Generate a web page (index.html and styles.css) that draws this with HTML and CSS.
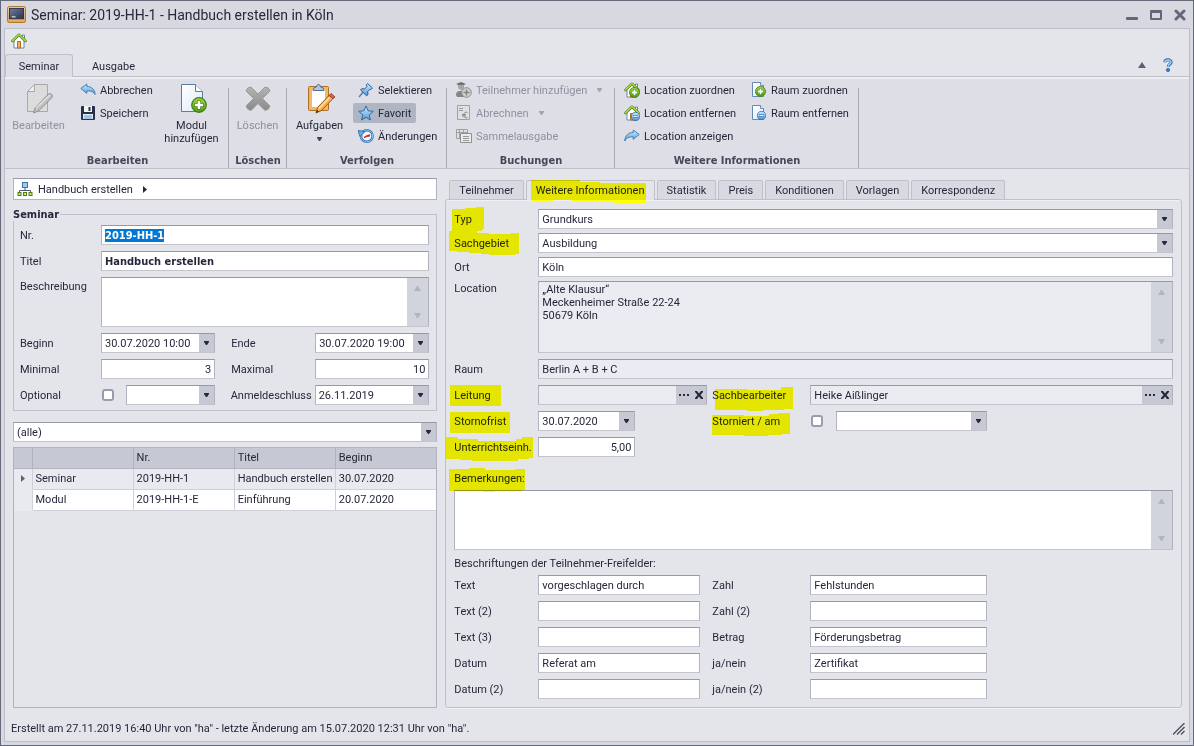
FILE: index.html
```html
<!DOCTYPE html>
<html lang="de">
<head>
<meta charset="utf-8">
<title>Seminar: 2019-HH-1 - Handbuch erstellen in Köln</title>
<link rel="stylesheet" href="styles.css">
</head>
<body>
<svg class="defs" width="0" height="0" aria-hidden="true">
  <defs>
    <linearGradient id="gBlue" x1="0" y1="0" x2="0" y2="1"><stop offset="0" stop-color="#d6edfc"/><stop offset="1" stop-color="#4c98d8"/></linearGradient>
    <linearGradient id="gGreen" x1="0" y1="0" x2="0" y2="1"><stop offset="0" stop-color="#a6d84a"/><stop offset="1" stop-color="#4f9a12"/></linearGradient>
    <linearGradient id="gGray" x1="0" y1="0" x2="0" y2="1"><stop offset="0" stop-color="#b4b4b4"/><stop offset="1" stop-color="#8a8a8a"/></linearGradient>
    <linearGradient id="gPage" x1="0" y1="0" x2="1" y2="1"><stop offset="0" stop-color="#ffffff"/><stop offset="1" stop-color="#dfeafa"/></linearGradient>
    <linearGradient id="gOrange" x1="0" y1="0" x2="0" y2="1"><stop offset="0" stop-color="#ffdfae"/><stop offset="1" stop-color="#e5a355"/></linearGradient>
    <linearGradient id="gScreen" x1="0" y1="0" x2="1" y2="1"><stop offset="0" stop-color="#6f7d9c"/><stop offset="1" stop-color="#27324e"/></linearGradient>
    <symbol id="down" viewBox="0 0 5 4"><path d="M0 0h5v1L3 4H2L0 1z"/></symbol>
    <symbol id="up" viewBox="0 0 7 5"><path d="M3 0h1l3 5H0z"/></symbol>
    <symbol id="down7" viewBox="0 0 7 5"><path d="M0 0h7L4 5H3z"/></symbol>
    <symbol id="house" viewBox="0 0 16 16">
      <path d="M11.500 2h2v4l-2-2z" fill="#fff" stroke="#6e84a8"/>
      <path d="M3 7.500l5-5 5 5v7.500H3z" fill="#fff" stroke="#6e84a8"/>
      <path d="M6.500 8.500h3V15h-3z" fill="#f2b066" stroke="#b06a22"/>
      <path d="M1.500 8L8 1.800 14.500 8" fill="none" stroke="#5a8c1a" stroke-width="2.600" stroke-linecap="round" stroke-linejoin="round"/>
      <path d="M1.500 7.800L8 1.600l6.500 6.200" fill="none" stroke="#b7de55" stroke-width="1.200" stroke-linecap="round" stroke-linejoin="round"/>
    </symbol>
    <symbol id="plus" viewBox="0 0 16 16">
      <circle cx="8" cy="8" r="7.300" fill="url(#gGreen)" stroke="#3d7f14" stroke-width="1.200"/>
      <path d="M8 3.500v9M3.500 8h9" stroke="#3d7f14" stroke-width="4"/><path d="M8 4v8M4 8h8" stroke="#fff" stroke-width="2.600"/>
    </symbol>
    <symbol id="minus" viewBox="0 0 16 16">
      <circle cx="8" cy="8" r="7.200" fill="url(#gBlue)" stroke="#2a69ab" stroke-width="1.400"/>
      <path d="M3.500 8h9" stroke="#1f5c9d" stroke-width="3.600"/><path d="M4 8h8" stroke="#fff" stroke-width="1.600"/>
    </symbol>
    <symbol id="page" viewBox="0 0 16 16"><path d="M1.500.5h8l3 3v11h-11z" fill="url(#gPage)" stroke="#6a88b4"/><path d="M9.500.5v3h3" fill="#fff" stroke="#6a88b4"/></symbol>
    <symbol id="undo" viewBox="0 0 16 16"><path d="M.8 6.500l6-4.500v2.500c5 0 8 3 8.300 8-1.600-3-4.100-3.700-8.300-3.700v2.500z" fill="url(#gBlue)" stroke="#3f7db8" stroke-linejoin="round"/></symbol>
  </defs>
</svg>

<div class="window">
  <header class="titlebar">
    <svg class="app-icon" viewBox="0 0 20 18"><rect x=".5" y=".5" width="19" height="17" rx="2" fill="url(#gOrange)" stroke="#a8702c"/><rect x="2.500" y="2.500" width="15" height="11" fill="url(#gScreen)" stroke="#222b44"/><path d="M5 11.500h4" stroke="#fff"/></svg>
    <h1 class="title">Seminar: 2019-HH-1 - Handbuch erstellen in Köln</h1>
    <div class="window-buttons">
      <button aria-label="Minimieren"><svg viewBox="0 0 12 12"><rect y="8" width="12" height="3" rx="1"/></svg></button>
      <button aria-label="Maximieren"><svg viewBox="0 0 12 12"><path d="M1 1h10a1 1 0 0 1 1 1v8a1 1 0 0 1-1 1H1a1 1 0 0 1-1-1V2a1 1 0 0 1 1-1zm1 3v5h8V4z" fill-rule="evenodd"/></svg></button>
      <button aria-label="Schließen"><svg viewBox="0 0 12 12"><path d="M2 2l8 8M10 2l-8 8" stroke="#636779" stroke-width="3" stroke-linecap="round"/></svg></button>
    </div>
  </header>

  <div class="client">
    <div class="quickbar"><button aria-label="Start"><svg class="i16"><use href="#house"/></svg></button></div>
    <nav class="ribbon-tabs">
      <button class="ribbon-tab ribbon-tab-active">Seminar</button>
      <button class="ribbon-tab">Ausgabe</button>
      <div class="ribbon-help">
        <button aria-label="Menüband minimieren"><svg class="collapse" viewBox="0 0 8 6"><path d="M4 0l4 6H0z"/></svg></button>
        <button aria-label="Hilfe"><svg class="help" viewBox="0 0 10 14"><path d="M1.800 4.300C1.800 1 8.200 1 8.200 4.200c0 2.200-3 2-3 4.600" fill="none" stroke="#2d6aab" stroke-width="3"/><path d="M1.800 4C2 1.500 8 1.200 8 4.200c0 2-2.800 1.800-2.800 4.200" fill="none" stroke="#a5d3f5" stroke-width="1.400"/><circle cx="5" cy="12" r="1.700" fill="#3a7cc0" stroke="#2356a0" stroke-width=".6"/></svg></button>
      </div>
    </nav>

    <section class="ribbon">
      <div class="group g-edit">
        <div class="tools">
          <button class="big" disabled>
            <svg class="i32" viewBox="0 0 32 32"><path d="M11.500 2.500h13v27h-20v-20z" fill="#dcdcdc" stroke="#a9a9a9"/><path d="M11.500 2.500v7h-7z" fill="#f0f0f0" stroke="#a9a9a9"/><path d="M10.500 31l1.500-5L25.500 12c2-1.500 5 1.500 3.500 3.500L15.500 29z" fill="#c0c0c0" stroke="#8f8f8f"/><path d="M13 26L27 13" stroke="#e2e2e2" stroke-width="1.500"/></svg>
            <span>Bearbeiten</span></button>
          <div class="stack">
            <button class="small"><svg class="i16"><use href="#undo"/></svg>Abbrechen</button>
            <button class="small"><svg class="i16" viewBox="0 0 16 16"><rect x="1" y="1" width="14" height="14" rx="1" fill="#26324a"/><path d="M4 1h8v6H4z" fill="#f4f6fa"/><path d="M8.500 2h2v4h-2z" fill="#26324a"/><path d="M3 9h10v5H3z" fill="#e4edf8"/><path d="M4 11h8M4 13h8" stroke="#5f9bd0"/></svg>Speichern</button>
          </div>
          <button class="big">
            <svg class="i32" viewBox="0 0 32 32"><path d="M5.500 2.500h14l7 7v20h-21z" fill="url(#gPage)" stroke="#5b7aa8"/><path d="M19.500 2.500v7h7" fill="#fff" stroke="#5b7aa8"/><use href="#plus" x="15" y="15" width="16" height="16"/></svg>
            <span>Modul hinzufügen</span></button>
        </div>
        <h2>Bearbeiten</h2>
      </div>
      <div class="group g-delete">
        <div class="tools">
          <button class="big" disabled>
            <svg class="i32" viewBox="0 0 32 32"><path d="M9 5l7 7 7-7q4 0 5 4l-7.500 7.500L28 24q-1 4-5 4.500l-7-7-7 7Q5 28 4 24l7.500-7.500L4 9q1-4 5-4z" fill="url(#gGray)" stroke="#9a9a9a"/></svg>
            <span>Löschen</span></button>
        </div>
        <h2>Löschen</h2>
      </div>
      <div class="group g-track">
        <div class="tools">
          <button class="big">
            <svg class="i32" viewBox="0 0 32 32"><rect x="4.500" y="4.500" width="20" height="24" rx="1" fill="#f5b862" stroke="#a9702a"/><path d="M7.500 7.500h14v18h-14z" fill="#fff" stroke="#b9c3d8"/><path d="M9 8.500q0-3.500 3.500-3.500 0-2.500 2-2.500t2 2.500q3.500 0 3.500 3.500z" fill="#b4c4de" stroke="#5a6f98"/><path d="M12 31l1.500-5.500L25 13.500l4 3L17.500 28.500z" fill="#f6b153" stroke="#9a5a18"/><path d="M15 26.500L26 15" stroke="#ffe0a0" stroke-width="1.500"/><path d="M25 13.500l2-2 4 3.500-2 1.500z" fill="#e2635a" stroke="#9a3c36"/><path d="M12 31l1-3 2 1.500z" fill="#333"/></svg>
            <span>Aufgaben</span><svg class="caret"><use href="#down"/></svg></button>
          <div class="stack">
            <button class="small"><svg class="i16" viewBox="0 0 16 16"><path d="M1 15l5-6" stroke="#5f7fa5" stroke-width="1.500"/><path d="M9.500 1.500l5 4.500-1.500 1.500-1-.3-2.300 2.500.3 3-1.500 1-6-5.700 1.300-1.300 2.700.3L9 4.500l-.6-1.600z" fill="url(#gBlue)" stroke="#235c99"/></svg>Selektieren</button>
            <button class="small small-on" aria-pressed="true"><svg class="i16" viewBox="0 0 16 16"><path d="M8 1l2.100 4.800 5.200.5-4 3.500 1.200 5.200L8 12.300 3.500 15l1.200-5.200-4-3.500 5.200-.5z" fill="url(#gBlue)" stroke="#2b6cad" stroke-linejoin="round"/></svg>Favorit</button>
            <button class="small"><svg class="i16" viewBox="0 0 16 16"><circle cx="8.800" cy="8" r="5.800" fill="#f4f8fd" stroke="#2f73b5" stroke-width="2.400"/><circle cx="8.800" cy="8" r="5.900" fill="none" stroke="#8fc4ec" stroke-width="1"/><path d="M0 2.500l7 1L2 8.500z" fill="#6cb0e4" stroke="#235c99" stroke-width=".8"/><path d="M6 9.500L9 8l3-1" stroke="#d33" stroke-width="1.500"/><path d="M9 8h3" stroke="#444"/></svg>Änderungen</button>
          </div>
        </div>
        <h2>Verfolgen</h2>
      </div>
      <div class="group g-book">
        <div class="tools">
          <div class="stack">
            <button class="small" disabled><svg class="i16" viewBox="0 0 16 16"><path d="M0 2l5-2 5 2-5 2z" fill="#707070"/><path d="M2 3h6v3q-3 4-6 0z" fill="#a8a8a8"/><path d="M0 13q0-4 4-4h4v6H1z" fill="#858585"/><circle cx="10.500" cy="10.500" r="4.800" fill="#d0d0d0" stroke="#8a8a8a"/><path d="M10.500 7.500v6M7.500 10.500h6" stroke="#858585" stroke-width="1.500"/></svg>Teilnehmer hinzufügen<svg class="caret"><use href="#down"/></svg></button>
            <button class="small" disabled><svg class="i16" viewBox="0 0 16 16"><path d="M1.500.5h12v14h-12z" fill="#e0e0e3" stroke="#a0a0a0"/><path d="M3 3.500h4M3 5.500h4" stroke="#999"/><path d="M11.500 7.500q-3-1.500-3.800 2.500.800 4 3.800 2.500M6 9.500h4M6 11h4" fill="none" stroke="#8a8a8a"/></svg>Abrechnen<svg class="caret"><use href="#down"/></svg></button>
            <button class="small" disabled><svg class="i16" viewBox="0 0 16 16"><path d="M.5 1.500h11v9H.5zM.5 4.500h11M3.500 1.500v9M7.500 1.500v3" fill="#e0e0e3" stroke="#a0a0a0"/><path d="M4.500 5.500h11v9h-11z" fill="#ebebed" stroke="#909090"/><path d="M7 8.500h6M7 10.500h6M7 12.500h6" stroke="#999"/></svg>Sammelausgabe</button>
          </div>
        </div>
        <h2>Buchungen</h2>
      </div>
      <div class="group g-info">
        <div class="tools">
          <div class="stack">
            <button class="small"><svg class="i16" viewBox="0 0 16 16"><use href="#house"/><use href="#plus" x="5" y="5" width="11" height="11"/></svg>Location zuordnen</button>
            <button class="small"><svg class="i16" viewBox="0 0 16 16"><use href="#house"/><use href="#minus" x="7" y="7" width="9" height="9"/></svg>Location entfernen</button>
            <button class="small"><svg class="i16" viewBox="0 0 16 16"><path d="M15.200 6.500l-6-4.500v2.500c-5 0-8 3-8.500 8.500 2-3.500 4.500-4.200 8.500-4.200v2.500z" fill="url(#gBlue)" stroke="#3f7db8" stroke-linejoin="round"/></svg>Location anzeigen</button>
          </div>
          <div class="stack">
            <button class="small"><svg class="i16" viewBox="0 0 16 16"><use href="#page"/><use href="#plus" x="4" y="4" width="11" height="11"/></svg>Raum zuordnen</button>
            <button class="small"><svg class="i16" viewBox="0 0 16 16"><use href="#page"/><use href="#minus" x="6" y="6" width="9" height="9"/></svg>Raum entfernen</button>
          </div>
        </div>
        <h2>Weitere Informationen</h2>
      </div>
    </section>

    <main class="content">
      <section class="left">
        <nav class="breadcrumb">
          <svg class="i16" viewBox="0 0 16 16"><rect x="5.500" y="1.500" width="5" height="5" fill="#9ccbf2" stroke="#3c72b0"/><path d="M8 7v3M2.500 11V9.500h11V11" fill="none" stroke="#4e5a70"/><g fill="#c4ea70" stroke="#4c7f14"><rect x="1" y="11.500" width="3" height="3"/><rect x="6.500" y="11.500" width="3" height="3"/><rect x="12" y="11.500" width="3" height="3"/></g></svg>
          <a href="#">Handbuch erstellen</a>
          <svg class="next" viewBox="0 0 4 7"><path d="M0 0l4 3.500L0 7z"/></svg>
        </nav>

        <fieldset class="box">
          <legend>Seminar</legend>
          <div class="row"><label for="nr">Nr.</label><input class="field strong grow" id="nr" value="2019-HH-1"></div>
          <div class="row"><label for="titel">Titel</label><input class="field strong grow" id="titel" value="Handbuch erstellen"></div>
          <div class="row row-top"><label for="beschr">Beschreibung</label>
            <div class="memo memo-short"><textarea id="beschr"></textarea><span class="scroll"><svg><use href="#up"/></svg><svg><use href="#down7"/></svg></span></div></div>
          <div class="row"><label for="beginn">Beginn</label><div class="combo half"><input id="beginn" value="30.07.2020 10:00"><button aria-label="Kalender"><svg class="caret"><use href="#down"/></svg></button></div>
            <label class="second" for="ende">Ende</label><div class="combo half"><input id="ende" value="30.07.2020 19:00"><button aria-label="Kalender"><svg class="caret"><use href="#down"/></svg></button></div></div>
          <div class="row"><label for="min">Minimal</label><input class="field number half" id="min" value="3">
            <label class="second" for="max">Maximal</label><input class="field number half" id="max" value="10"></div>
          <div class="row"><label for="opt">Optional</label><div class="half checked-date"><input type="checkbox" id="opt"><div class="combo grow"><input aria-label="Optional bis"><button aria-label="Kalender"><svg class="caret"><use href="#down"/></svg></button></div></div>
            <label class="second" for="schluss">Anmeldeschluss</label><div class="combo half"><input id="schluss" value="26.11.2019"><button aria-label="Kalender"><svg class="caret"><use href="#down"/></svg></button></div></div>
        </fieldset>

        <div class="combo filter"><select aria-label="Filter"><option>(alle)</option></select><span class="drop"><svg class="caret"><use href="#down"/></svg></span></div>

        <div class="list">
          <table>
            <colgroup><col class="c-mark"><col><col><col><col></colgroup>
            <thead><tr><th></th><th></th><th>Nr.</th><th>Titel</th><th>Beginn</th></tr></thead>
            <tbody>
              <tr class="current"><td class="mark"><svg class="next" viewBox="0 0 4 7"><path d="M0 0l4 3.500L0 7z"/></svg></td><td>Seminar</td><td>2019-HH-1</td><td>Handbuch erstellen</td><td>30.07.2020</td></tr>
              <tr><td class="mark"></td><td>Modul</td><td>2019-HH-1-E</td><td>Einführung</td><td>20.07.2020</td></tr>
            </tbody>
          </table>
        </div>
      </section>

      <section class="right">
        <div class="tabs">
          <button>Teilnehmer</button>
          <button class="tab-active"><span class="marked">Weitere Informationen<svg class="pen pen-tab" viewBox="0 0 116 24"><path d="M0 0h49v2h20v1h46v20h-33v-1h-20v-1h-22v-1H22v1H0z"/></svg></span></button>
          <button>Statistik</button><button>Preis</button><button>Konditionen</button><button>Vorlagen</button><button>Korrespondenz</button>
        </div>
        <div class="panel">
          <div class="rows rows-tight">
            <div class="row"><label for="typ"><span class="marked">Typ<svg class="pen pen-typ" viewBox="0 0 32 24"><path d="M0 2h13V1h11V0h8v22h-2v2H0z"/></svg></span></label><div class="combo grow"><select id="typ"><option>Grundkurs</option></select><span class="drop"><svg class="caret"><use href="#down"/></svg></span></div></div>
            <div class="row"><label for="sach"><span class="marked">Sachgebiet<svg class="pen pen-sach" viewBox="0 0 70 25"><path d="M0 0h28v2h12v1h22V2h8v21h-4v1H40v-1H32v-1H20v-1H8v-1H0z"/></svg></span></label><div class="combo grow"><select id="sach"><option>Ausbildung</option></select><span class="drop"><svg class="caret"><use href="#down"/></svg></span></div></div>
            <div class="row"><label for="ort">Ort</label><input class="field grow" id="ort" value="Köln"></div>
            <div class="row row-top"><label for="loc">Location</label>
              <div class="memo memo-tall readonly"><textarea id="loc" readonly>„Alte Klausur“
Meckenheimer Straße 22-24
50679 Köln</textarea><span class="scroll"><svg><use href="#up"/></svg><svg><use href="#down7"/></svg></span></div></div>
          </div>
          <div class="rows">
            <div class="row"><label for="raum">Raum</label><input class="field grow readonly" id="raum" value="Berlin A + B + C" readonly></div>
            <div class="row"><label for="leitung"><span class="marked">Leitung<svg class="pen pen-leit" viewBox="0 0 51 21"><path d="M0 0h51v21H0z"/></svg></span></label>
              <div class="cell"><div class="combo readonly lookup"><input id="leitung" readonly><button aria-label="Auswählen"><svg class="dots" viewBox="0 0 10 2"><path d="M0 0h2v2H0zM4 0h2v2H4zM8 0h2v2H8z"/></svg></button><button aria-label="Leeren"><svg class="cross" viewBox="0 0 10 8"><path d="M1 0h2l2 2.500L7 0h2v1L6.500 4 9 7v1H7L5 5.500 3 8H1V7l2.500-3L1 1z"/></svg></button></div></div>
              <label class="third" for="bearb"><span class="marked">Sachbearbeiter<svg class="pen pen-bearb" viewBox="0 0 78 24"><path d="M0 2h32v1h34V0h12v22h-9v1H48v1H32v-1H0z"/></svg></span></label>
              <div class="combo readonly grow"><input id="bearb" value="Heike Aißlinger" readonly><button aria-label="Auswählen"><svg class="dots" viewBox="0 0 10 2"><path d="M0 0h2v2H0zM4 0h2v2H4zM8 0h2v2H8z"/></svg></button><button aria-label="Leeren"><svg class="cross" viewBox="0 0 10 8"><path d="M1 0h2l2 2.500L7 0h2v1L6.500 4 9 7v1H7L5 5.500 3 8H1V7l2.500-3L1 1z"/></svg></button></div></div>
            <div class="row"><label for="frist"><span class="marked">Stornofrist<svg class="pen pen-frist" viewBox="0 0 60 21"><path d="M0 0h60v21H0z"/></svg></span></label>
              <div class="cell"><div class="combo short"><input id="frist" value="30.07.2020"><button aria-label="Kalender"><svg class="caret"><use href="#down"/></svg></button></div></div>
              <label class="third" for="storno"><span class="marked">Storniert / am<svg class="pen pen-storno" viewBox="0 0 78 24"><path d="M0 2h32v1h25V1h9V0h12v21h-8v1H56v1H32v-1H0z"/></svg></span></label>
              <input type="checkbox" id="storno"><div class="combo medium"><input aria-label="Storniert am"><button aria-label="Kalender"><svg class="caret"><use href="#down"/></svg></button></div></div>
            <div class="row"><label for="einh"><span class="marked">Unterrichtseinh.<svg class="pen pen-einh" viewBox="0 0 87 25"><path d="M0 0h12v2h20v2h38V2h6V0h11v21h-4v1H72v2H26v-1H14v-1H0z"/></svg></span></label><input class="field number short" id="einh" value="5,00"></div>
          </div>
          <label class="notes-label" for="bem"><span class="marked">Bemerkungen:<svg class="pen pen-bem" viewBox="0 0 76 25"><path d="M0 1h20V0h16v2h30V1h10v21h-3v1H46v1H34v-1H0z"/></svg></span></label>
          <div class="memo memo-notes"><textarea id="bem"></textarea><span class="scroll"><svg><use href="#up"/></svg><svg><use href="#down7"/></svg></span></div>
          <h3>Beschriftungen der Teilnehmer-Freifelder:</h3>
          <div class="rows">
            <div class="row"><label for="t1">Text</label><div class="cell"><input class="field text" id="t1" value="vorgeschlagen durch"></div><label class="third" for="z1">Zahl</label><input class="field wide" id="z1" value="Fehlstunden"></div>
            <div class="row"><label for="t2">Text (2)</label><div class="cell"><input class="field text" id="t2"></div><label class="third" for="z2">Zahl (2)</label><input class="field wide" id="z2"></div>
            <div class="row"><label for="t3">Text (3)</label><div class="cell"><input class="field text" id="t3"></div><label class="third" for="z3">Betrag</label><input class="field wide" id="z3" value="Förderungsbetrag"></div>
            <div class="row"><label for="d1">Datum</label><div class="cell"><input class="field text" id="d1" value="Referat am"></div><label class="third" for="j1">ja/nein</label><input class="field wide" id="j1" value="Zertifikat"></div>
            <div class="row"><label for="d2">Datum (2)</label><div class="cell"><input class="field text" id="d2"></div><label class="third" for="j2">ja/nein (2)</label><input class="field wide" id="j2"></div>
          </div>
        </div>
      </section>
    </main>

    <footer class="status">
      <span>Erstellt am 27.11.2019 16:40 Uhr von "ha" - letzte Änderung am 15.07.2020 12:31 Uhr von "ha".</span>
      <svg class="grip" viewBox="0 0 12 12"><path d="M0 11.500L11.500 0M4 11.500L11.500 4M8 11.500L11.500 8" stroke="#4b4d5c" stroke-width="1.300"/></svg>
    </footer>
  </div>
</div>
<script src="app.js"></script>
</body>
</html>
```
FILE: app.js
```js
const nr = document.getElementById("nr");
nr.focus();
nr.select();
```
FILE: styles.css
```css
* { box-sizing: border-box; }
body { margin: 0; font: 11px/13px Roboto, "Liberation Sans", sans-serif; color: #26273a; }
button, input, select, textarea { font: inherit; color: inherit; margin: 0; padding: 0; border: 0; background: none; outline: none; border-radius: 0; }
svg { display: block; flex: none; }
h1, h2, h3 { margin: 0; font-weight: normal; font-size: 11px; }
.defs { position: absolute; }

.window { min-height: 100vh; display: flex; flex-direction: column; background: #d8d9e0; border: 1px solid #666979; padding: 0 3px 3px; }
.titlebar { height: 27px; display: flex; align-items: center; padding: 0 3px; gap: 5px; }
.app-icon { width: 19px; height: 17px; }
.title { font-size: 14px; line-height: 18px; flex: 1; }
.window-buttons { display: flex; gap: 12px; padding-right: 1px; }
.window-buttons svg { width: 12px; height: 12px; fill: #636779; }

.client { flex: 1; display: flex; flex-direction: column; background: #e4e5eb; border: 1px solid #bdbeca; }
.quickbar { height: 25px; padding: 4px 6px 0; }
.i16 { width: 16px; height: 16px; }
.i32 { width: 32px; height: 32px; }

.ribbon-tabs { display: flex; height: 23px; border-bottom: 1px solid #bfc0ca; }
.ribbon-tab { height: 23px; padding: 0 18px; border: 1px solid transparent; border-bottom: 0; }
.ribbon-tab-active { width: 68px; padding: 0; background: #dedfe6; border-color: #bfc0ca; border-radius: 3px 3px 0 0; }
.ribbon-help { margin-left: auto; display: flex; align-items: center; gap: 17px; padding-right: 16px; }
.collapse { width: 8px; height: 6px; fill: #5c6077; }
.help { width: 10px; height: 14px; }

.ribbon { display: flex; height: 92px; padding-left: 1px; background: linear-gradient(#eeeef3 2px, #dedfe6 2px); border-bottom: 1px solid #bfc0ca; }
.group { display: flex; flex-direction: column; padding-top: 3px; background: linear-gradient(#a9aab4, #a9aab4) right bottom / 1px 80px no-repeat; }
.group h2 { font: bold 11px/14px "DejaVu Sans Condensed", "DejaVu Sans", sans-serif; color: #45465a; text-align: center; white-space: nowrap; }
.tools { flex: 1; display: flex; padding-left: 4px; gap: 5px; }
.g-edit { width: 223px; }
.g-edit .tools { padding-left: 1px; }
.g-edit .stack { width: 80px; }
.g-delete { width: 58px; }
.g-delete .tools { padding-left: 0; }
.g-track { width: 160px; }
.g-book { width: 168px; }
.g-info { width: 244px; }
.g-info .stack:first-child { width: 122px; }
.big { width: 57px; padding-top: 2px; display: flex; flex-direction: column; align-items: center; justify-content: flex-start; gap: 5px; }
.g-edit .big { width: 63px; }
.big .caret { fill: #45465a; }
.big:disabled, .small:disabled { color: #8f90a1; }
.stack { display: flex; flex-direction: column; gap: 3px; align-items: flex-start; }
.small { height: 20px; display: flex; align-items: center; gap: 4px; padding: 0 5px; white-space: nowrap; }
.small-on { background: #b0b5c3; border-radius: 2px; }
.caret { width: 5px; height: 4px; fill: #26273a; }
.small .caret { fill: #a5a6b3; margin-left: 6px; }

.content { flex: 1; display: grid; grid-template-columns: 424fr 736fr; gap: 8px; padding: 9px 7px 0 8px; }
.left { display: flex; flex-direction: column; min-width: 0; }
.breadcrumb { height: 22px; display: flex; align-items: center; gap: 5px; padding: 0 3px; background: #fff; border: 1px solid #b2b3c2; border-top-color: #9798a8; }
.breadcrumb a { color: inherit; text-decoration: none; }
.next { width: 4px; height: 7px; fill: #26273a; }
.breadcrumb .next { margin-left: 5px; }

.box { margin: 8px 0 0; min-width: 0; border: 1px solid #bfc0cb; padding: 4px 7px 5px 6px; display: flex; flex-direction: column; gap: 6px; }
.box legend { margin-left: -7px; padding: 0 1px 0 0; }
.box legend, .strong { font: bold 11px/13px "DejaVu Sans Condensed", "DejaVu Sans", sans-serif; }
.row { display: flex; align-items: center; }
.row > label { flex: none; width: 81px; white-space: nowrap; }
.row > .second { width: 100px; padding-left: 16px; }
.row-top { align-items: flex-start; }
.row-top > label { padding-top: 3px; }
.grow { flex: 1; min-width: 0; }
.half { flex: 1 1 0; min-width: 0; width: 0; }
.field { display: block; height: 20px; padding: 0 3px; background: #fff; border: 1px solid #b2b3c2; border-top-color: #9798a8; border-bottom-color: #c3c4ce; }
.number { text-align: right; }
#nr::selection { background: #0078d7; color: #fff; }
.combo { position: relative; display: flex; height: 20px; background: #fff; border: 1px solid #b2b3c2; border-top-color: #9798a8; border-bottom-color: #c3c4ce; }
.combo input, .combo select { flex: 1; min-width: 0; width: 0; padding: 0 2px 0 3px; appearance: none; }
.combo button, .drop { width: 15px; display: flex; align-items: center; justify-content: center; background: #c6c8d4; }
.drop { position: absolute; top: 0; right: 0; bottom: 0; pointer-events: none; }
.cross { width: 10px; height: 8px; fill: #26273a; }
.dots { width: 10px; height: 2px; fill: #26273a; }
.readonly, .combo.readonly { background: #ebecf1; }
.checked-date { display: flex; align-items: center; gap: 12px; padding-left: 1px; }
input[type="checkbox"] { appearance: none; flex: none; width: 12px; height: 12px; background: #fff; border: 2px solid #9b9caf; border-radius: 3px; }

.memo { flex: 1; display: flex; background: #fff; border: 1px solid #b2b3c2; border-top-color: #9798a8; border-bottom-color: #c3c4ce; }
.memo textarea { flex: 1; min-width: 0; padding: 1px 3px; resize: none; overflow: hidden; }
.memo.readonly { background: #ebecf1; }
.memo-short { height: 50px; }
.memo-tall { height: 72px; }
.memo-notes { flex: none; height: 60px; }
.scroll { width: 21px; display: flex; flex-direction: column; align-items: center; justify-content: space-between; padding: 8px 0; background: #d1d4dd; }
.scroll svg { width: 7px; height: 5px; fill: #b1b4bf; }

.filter { margin-top: 11px; }
.list { flex: 1; margin-top: 5px; border: 1px solid #b2b3c2; }
.list table { width: 100%; table-layout: fixed; border-collapse: collapse; }
.c-mark { width: 18px; }
.list th, .list td { height: 21px; padding: 0 3px; text-align: left; font-weight: normal; white-space: nowrap; border-right: 1px solid #cfd1da; border-bottom: 1px solid #cfd1da; background: #fff; }
.list th { height: 20px; background: #c6c8d4; border-color: #b2b3c2; }
.list .current td, .list td.mark { background: #e9eaf0; }
.list td.mark { padding: 0 0 0 7px; border-bottom-color: #e9eaf0; }
.list th:last-child, .list td:last-child { border-right: 0; }
.mark .next { fill: #5c6077; }

.right { display: flex; flex-direction: column; min-width: 0; padding-top: 2px; }
.tabs { display: flex; gap: 2px; padding-left: 4px; height: 19px; }
.tabs button { height: 19px; padding: 0 9px; background: #d8d9e1; border: 1px solid #bfc0cb; border-bottom: 0; border-radius: 2px 2px 0 0; white-space: nowrap; }
.tabs .tab-active { height: 20px; background: #e4e5eb; position: relative; z-index: 1; }
.panel { flex: 1; border: 1px solid #bfc0cb; border-radius: 3px; box-shadow: inset 0 1px #f1f1f5, 0 1px #f1f1f5; padding: 9px 8px 8px; display: flex; flex-direction: column; }
.rows { display: flex; flex-direction: column; gap: 6px; }
.rows-tight { gap: 4px; margin-bottom: 6px; }
.panel .row > label { width: 84px; padding-left: 0; }
.panel .row > .third { width: 98px; }
.cell { flex: none; width: 174px; }
.lookup { width: 169px; }
.short { width: 97px; }
.medium { width: 151px; }
.text { width: 162px; }
.wide { width: 177px; }
.panel .row-top > label { padding-top: 1px; }
.panel input[type="checkbox"] { margin: 0 13px 0 1px; }
.notes-label { margin: 15px 0 5px; line-height: 13px; }
h3 { margin: 7px 0 5px; line-height: 13px; }

.marked { position: relative; }
.pen { position: absolute; fill: #ff0; mix-blend-mode: multiply; pointer-events: none; }
.pen-tab { left: -5px; top: -4px; width: 116px; height: 24px; }
.pen-typ { left: -2px; top: -6px; width: 32px; height: 24px; }
.pen-sach { left: -5px; top: -6px; width: 70px; height: 25px; }
.pen-leit { left: -4px; top: -4px; width: 51px; height: 21px; }
.pen-bearb { left: 3px; top: -2px; width: 78px; height: 24px; }
.pen-frist { left: -4px; top: -3px; width: 60px; height: 21px; }
.pen-storno { left: 0; top: -2px; width: 78px; height: 24px; }
.pen-einh { left: -8px; top: -4px; width: 87px; height: 25px; }
.pen-bem { left: -5px; top: -4px; width: 76px; height: 25px; }

.status { height: 33px; display: flex; align-items: center; justify-content: space-between; padding: 8px 4px 0 6px; }
.grip { width: 12px; height: 12px; }
```
